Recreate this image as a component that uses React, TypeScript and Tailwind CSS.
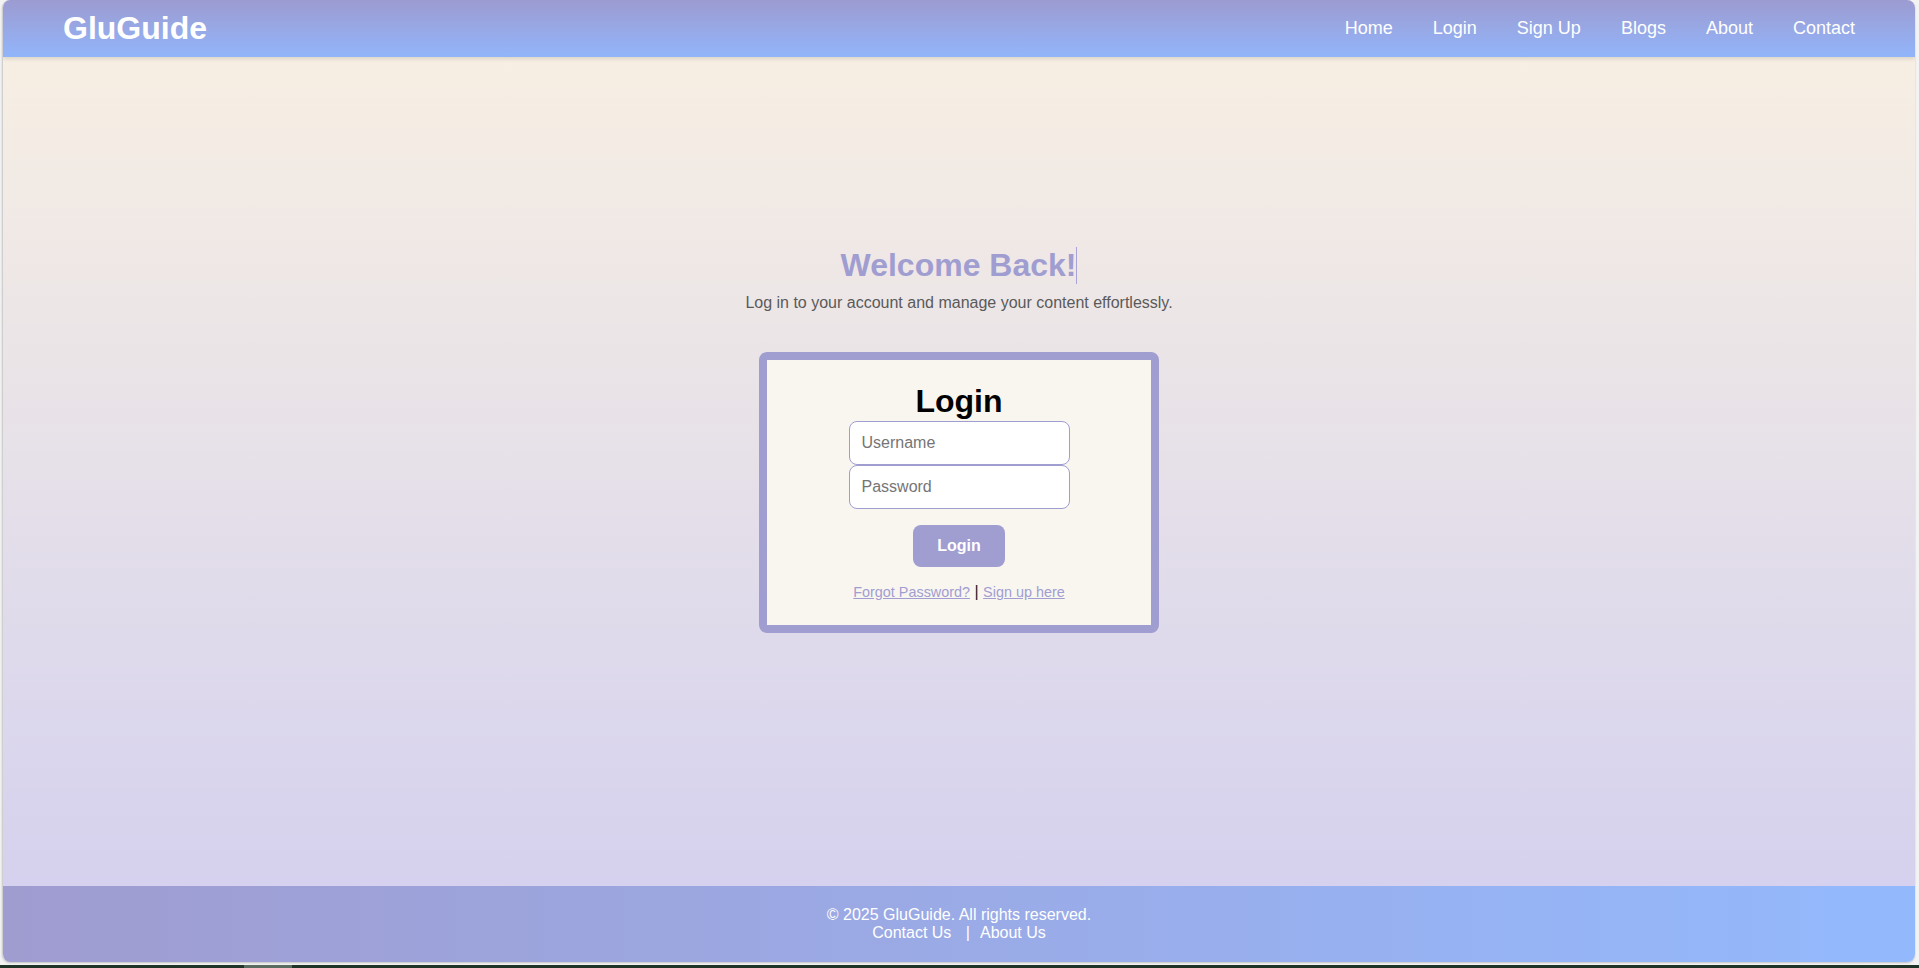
const navLinks = ["Home", "Login", "Sign Up", "Blogs", "About", "Contact"];

function Header() {
  return (
    <header className="relative z-10 flex items-center justify-between bg-linear-to-b from-[#9c9bd1] to-[#91b5fa] px-[60px] py-[10px] shadow-[0_2px_4px_rgba(0,0,0,0.12)]">
      <h1 className="text-[32px] font-bold text-white">GluGuide</h1>
      <nav>
        <ul className="flex gap-10">
          {navLinks.map((label) => (
            <li key={label}>
              <a href="#" className="text-[18px] text-white">
                {label}
              </a>
            </li>
          ))}
        </ul>
      </nav>
    </header>
  );
}

function LoginCard() {
  return (
    <div className="w-[400px] rounded-lg border-8 border-[#a09dd1] bg-[#f9f6f0] pt-[23px] pb-[24px]">
      <form className="flex flex-col items-center" onSubmit={(e) => e.preventDefault()}>
        <h2 className="text-[32px] font-bold text-black">Login</h2>
        <div className="mt-[1px] flex flex-col">
          <input
            type="text"
            placeholder="Username"
            className="h-[44px] w-[221px] rounded-lg border border-[#a09dd1] bg-white px-3 text-[16px] text-[#333] placeholder:text-[#757575] outline-none"
          />
          <input
            type="password"
            placeholder="Password"
            className="h-[44px] w-[221px] rounded-lg border border-[#a09dd1] bg-white px-3 text-[16px] text-[#333] placeholder:text-[#757575] outline-none"
          />
        </div>
        <button
          type="submit"
          className="mt-4 rounded-lg bg-[#a09dd1] px-6 py-3 text-[16px] font-bold text-white"
        >
          Login
        </button>
        <p className="mt-4 text-[16px] text-[#1a1a1a]">
          <a href="#" className="text-[14.4px] text-[#a09dd1] underline">
            Forgot Password?
          </a>{" "}
          |{" "}
          <a href="#" className="text-[14.4px] text-[#a09dd1] underline">
            Sign up here
          </a>
        </p>
      </form>
    </div>
  );
}

export default function App() {
  return (
    <div className="flex h-[968px] flex-col overflow-hidden bg-[#f3f3f3] font-['Liberation_Sans',Arial,sans-serif] leading-[normal]">
      <div className="ml-[2px] flex h-[962px] w-[1913px] flex-col overflow-hidden rounded-lg border-l border-[#cfcfcf] shadow-[0_1px_2px_rgba(0,0,0,0.2)]">
        <Header />
        <main className="flex flex-1 flex-col items-center bg-linear-to-b from-[#f7efe3] to-[#d5d1ee] pt-[190px]">
          <h1 className="border-r border-[#a8a4d8] text-[32px] font-bold text-[#a09dd1]">
            Welcome Back!
          </h1>
          <p className="mt-[10px] text-[16px] text-[#5a5a5a]">
            Log in to your account and manage your content effortlessly.
          </p>
          <div className="mt-[40px]">
            <LoginCard />
          </div>
        </main>
        <footer className="bg-linear-to-r from-[#9f9cd0] to-[#93b9fd] py-5 text-center text-[16px] text-white">
          <p>© 2025 GluGuide. All rights reserved.</p>
          <p>
            <a href="#" className="mx-[10px]">
              Contact Us
            </a>{" "}
            |
            <a href="#" className="mx-[10px]">
              About Us
            </a>
          </p>
        </footer>
      </div>
      <div className="mt-auto flex h-[3px] bg-[#1f3427]">
        <div className="ml-[244px] w-[48px] bg-[#5a6b60]" />
      </div>
    </div>
  );
}
